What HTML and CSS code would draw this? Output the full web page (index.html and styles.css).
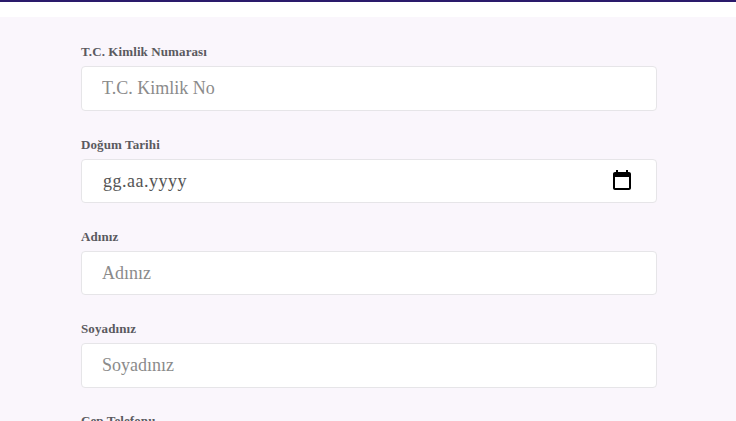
FILE: index.html
```html
<!DOCTYPE html>
<html lang="tr">
<head>
    <meta charset="UTF-8">
    <meta name="viewport" content="width=device-width, initial-scale=1.0">
    <title>Kayıt Formu</title>
    <link rel="stylesheet" href="styles.css">
</head>
<body>
    <div class="topbar"></div>
    <div class="page">
        <form class="form">
            <div class="field">
                <label for="tc">T.C. Kimlik Numarası</label>
                <input id="tc" type="text" placeholder="T.C. Kimlik No">
            </div>
            <div class="field">
                <label for="birth">Doğum Tarihi</label>
                <div class="date-box">
                    <input id="birth" class="date-input" type="text" placeholder="gg.aa.yyyy">
                    <svg class="date-icon" width="24" height="24" viewBox="0 0 24 24" aria-hidden="true">
                        <path d="M19 4h-1V2h-2v2H8V2H6v2H5c-1.1 0-2 .9-2 2v14c0 1.1.9 2 2 2h14c1.1 0 2-.9 2-2V6c0-1.1-.9-2-2-2zm0 16H5V9h14v11z"/>
                    </svg>
                </div>
            </div>
            <div class="field">
                <label for="name">Adınız</label>
                <input id="name" type="text" placeholder="Adınız">
            </div>
            <div class="field">
                <label for="surname">Soyadınız</label>
                <input id="surname" type="text" placeholder="Soyadınız">
            </div>
            <div class="field">
                <label for="phone">Cep Telefonu</label>
                <input id="phone" type="text" placeholder="Cep Telefonu">
            </div>
        </form>
    </div>
</body>
</html>
```
FILE: styles.css
```css
html, body {
    margin: 0;
    height: 100%;
    overflow: hidden;
}
body {
    font-family: "Liberation Serif", "Times New Roman", serif;
    background-color: #ffffff;
}
.topbar {
    height: 2px;
    background-color: #2a1a6b;
    margin-bottom: 15px;
}
.page {
    background-color: #faf6fc;
    padding: 27.2px 79px 40px 81px;
}
.form {
    display: flex;
    flex-direction: column;
    gap: 25.73px;
}
.field label {
    display: block;
    font-size: 13px;
    font-weight: bold;
    line-height: 15px;
    letter-spacing: 0.1px;
    color: #5a5a5f;
    margin-bottom: 7px;
}
.field input {
    display: block;
    box-sizing: border-box;
    width: 100%;
    height: 44.6px;
    padding: 0 20px;
    font-family: inherit;
    font-size: 18px;
    color: #444444;
    background-color: #ffffff;
    border: 1px solid #e6e5e8;
    border-radius: 4px;
    outline: none;
}
.field input::placeholder {
    color: #8b8b8b;
    opacity: 1;
}
.date-box {
    position: relative;
}
.field .date-input {
    padding: 2px 20px 0 21px;
}
.field .date-input::placeholder {
    color: #555555;
    letter-spacing: 0.5px;
}
.date-icon {
    position: absolute;
    top: 9.5px;
    right: 23px;
}
```
